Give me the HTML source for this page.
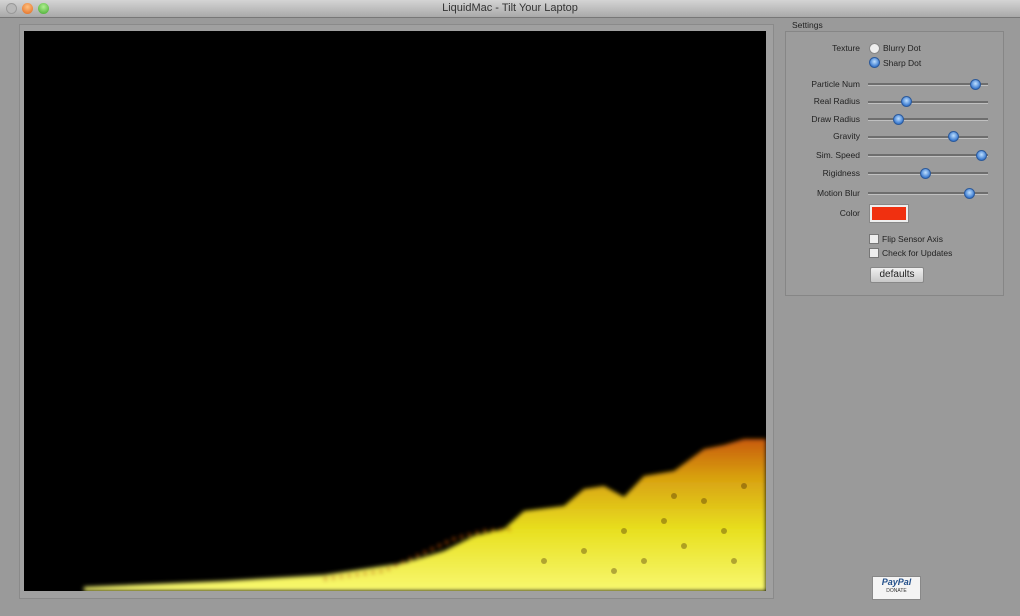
<!DOCTYPE html>
<html><head><style>
body{margin:0;width:1020px;height:616px;overflow:hidden;background:#9a9a9a;font-family:"Liberation Sans",sans-serif;position:relative}
.tb{position:absolute;left:0;top:0;width:1020px;height:17px;background:linear-gradient(#d4d4d4,#a9a9a9);border-bottom:1px solid #777}
.tl{position:absolute;top:3px;width:11px;height:11px;border-radius:50%}
.title{position:absolute;top:2px;left:0;width:1020px;text-align:center;font-size:11px;color:#333}
.frame{position:absolute;left:19px;top:24px;width:753px;height:573px;border:1px solid #8a8a8a;background:#a0a0a0}
.cv{position:absolute;left:24px;top:31px;width:742px;height:560px;background:#000;overflow:hidden}
.lab{position:absolute;font-size:8.5px;color:#222;text-align:right;width:100px}
.trk{position:absolute;left:868px;width:120px;height:2px;background:#6e6e6e;border-bottom:1px solid #c0c0c0}
.th{position:absolute;width:9px;height:9px;border-radius:50%;background:radial-gradient(circle at 50% 40%,#bfe0ff,#3a7ad0 70%);border:1px solid #2d5a9a}
.panel{position:absolute;left:785px;top:31px;width:217px;height:263px;border:1px solid #868686;background:#9c9c9c}
.sm{position:absolute;font-size:8.5px;color:#222}
.cb{position:absolute;width:8px;height:8px;background:#eee;border:1px solid #777}
</style></head><body>
<div class="tb"></div>
<div class="tl" style="left:6px;background:#b8b8b8;border:1px solid #999;width:9px;height:9px"></div>
<div class="tl" style="left:22px;background:radial-gradient(circle at 50% 35%,#ffc080,#e0661a)"></div>
<div class="tl" style="left:38px;background:radial-gradient(circle at 50% 35%,#b0f090,#3ea52a)"></div>
<div class="title">LiquidMac - Tilt Your Laptop</div>
<div class="frame"></div>
<div class="cv">
<svg width="742" height="560" style="position:absolute;left:0;top:0">
<defs><linearGradient id="g" x1="0" y1="0" x2="0" y2="1"><stop offset="0" stop-color="#c85a10"/><stop offset="0.25" stop-color="#d8a010"/><stop offset="0.6" stop-color="#e8e020"/><stop offset="1" stop-color="#f8f870"/></linearGradient>
<filter id="b"><feGaussianBlur stdDeviation="2"/></filter></defs>
<g filter="url(#b)">
<polygon fill="url(#g)" points="60,560 60,556 200,550 300,544 380,532 420,520 450,505 480,498 500,480 540,475 560,458 580,455 600,466 620,445 650,440 680,418 700,414 720,408 742,408 742,560"/>
<polyline fill="none" stroke="#c05010" stroke-width="3" stroke-dasharray="3 5" points="300,548 360,540 400,522 430,508 460,500 490,498"/>
</g>
<g fill="#3a2000" opacity="0.35">
<circle cx="600" cy="500" r="3"/><circle cx="640" cy="490" r="3"/><circle cx="680" cy="470" r="3"/><circle cx="700" cy="500" r="3"/><circle cx="560" cy="520" r="3"/><circle cx="620" cy="530" r="3"/><circle cx="660" cy="515" r="3"/><circle cx="720" cy="455" r="3"/><circle cx="520" cy="530" r="3"/><circle cx="590" cy="540" r="3"/><circle cx="650" cy="465" r="3"/><circle cx="710" cy="530" r="3"/>
</g>
</svg>
</div>
<div class="sm" style="left:792px;top:20px">Settings</div>
<div class="panel"></div>
<div class="lab" style="left:760px;top:43px">Texture</div>
<div class="th" style="left:869px;top:43px;background:#eee;border-color:#888"></div>
<div class="sm" style="left:883px;top:43px">Blurry Dot</div>
<div class="th" style="left:869px;top:57px"></div>
<div class="sm" style="left:883px;top:58px">Sharp Dot</div>
<div class="lab" style="left:760px;top:79px">Particle Num</div><div class="trk" style="top:83px"></div><div class="th" style="left:970px;top:79px"></div>
<div class="lab" style="left:760px;top:96px">Real Radius</div><div class="trk" style="top:101px"></div><div class="th" style="left:901px;top:96px"></div>
<div class="lab" style="left:760px;top:114px">Draw Radius</div><div class="trk" style="top:118px"></div><div class="th" style="left:893px;top:114px"></div>
<div class="lab" style="left:760px;top:131px">Gravity</div><div class="trk" style="top:136px"></div><div class="th" style="left:948px;top:131px"></div>
<div class="lab" style="left:760px;top:150px">Sim. Speed</div><div class="trk" style="top:154px"></div><div class="th" style="left:976px;top:150px"></div>
<div class="lab" style="left:760px;top:168px">Rigidness</div><div class="trk" style="top:172px"></div><div class="th" style="left:920px;top:168px"></div>
<div class="lab" style="left:760px;top:188px">Motion Blur</div><div class="trk" style="top:192px"></div><div class="th" style="left:964px;top:188px"></div>
<div class="lab" style="left:760px;top:208px">Color</div>
<div style="position:absolute;left:870px;top:205px;width:34px;height:13px;background:#f03010;border:2px solid #eee;outline:1px solid #888"></div>
<div class="cb" style="left:869px;top:234px"></div><div class="sm" style="left:882px;top:234px">Flip Sensor Axis</div>
<div class="cb" style="left:869px;top:248px"></div><div class="sm" style="left:882px;top:248px">Check for Updates</div>
<div style="position:absolute;left:870px;top:267px;width:52px;height:14px;background:linear-gradient(#f0f0f0,#c8c8c8);border:1px solid #888;border-radius:2px;font-size:10px;text-align:center;line-height:14px;color:#222">defaults</div>
<div style="position:absolute;left:872px;top:576px;width:47px;height:22px;background:#f4f4f4;border:1px solid #888">
<div style="font-size:9px;font-weight:bold;font-style:italic;color:#24508a;text-align:center;line-height:11px">PayPal</div>
<div style="font-size:5px;color:#333;text-align:center">DONATE</div></div>
</body></html>
